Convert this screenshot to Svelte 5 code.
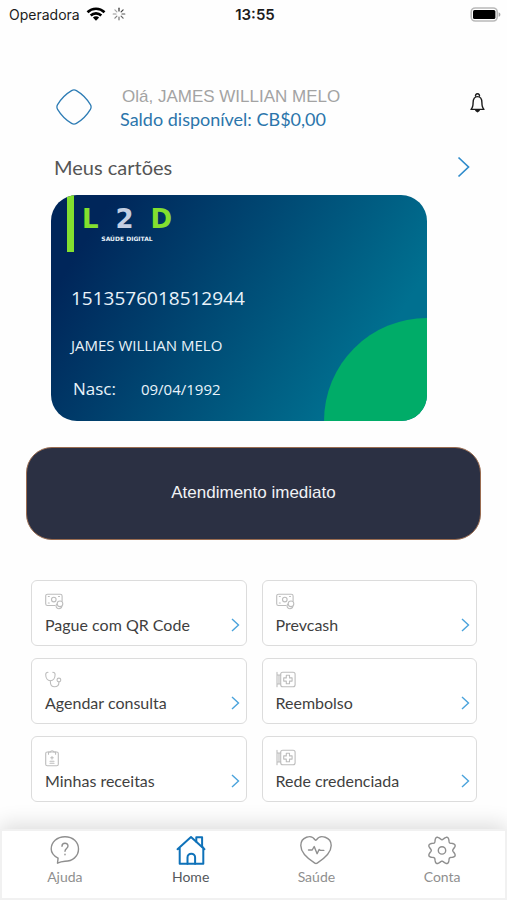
<script>
  const user = {
    name: 'JAMES WILLIAN MELO',
    balance: 'CB$0,00',
    card: '1513576018512944',
    birth: '09/04/1992'
  };

  const services = [
    { label: 'Pague com QR Code', icon: 'money' },
    { label: 'Prevcash', icon: 'money' },
    { label: 'Agendar consulta', icon: 'stethoscope' },
    { label: 'Reembolso', icon: 'sign' },
    { label: 'Minhas receitas', icon: 'clipboard' },
    { label: 'Rede credenciada', icon: 'sign' }
  ];

  const tabs = [
    { id: 'ajuda', label: 'Ajuda' },
    { id: 'home', label: 'Home' },
    { id: 'saude', label: 'Saúde' },
    { id: 'conta', label: 'Conta' }
  ];

  const rays = [0, 45, 90, 135, 180, 225, 270, 315];

  // wavy outline with eight rounded teeth
  const gearPoints = Array.from({ length: 120 }, (_, i) => {
    const a = (i / 120) * Math.PI * 2;
    const r = 12.4 - 1.7 * Math.cos(8 * a);
    return `${(17 + r * Math.cos(a)).toFixed(2)},${(15.4 + r * Math.sin(a)).toFixed(2)}`;
  }).join(' ');

  let active = $state('home');
</script>

<div class="app">
  <div class="status-bar">
    <div class="carrier">
      <span>Operadora</span>
      <svg width="20" height="14" viewBox="0 0 20 14" fill="none" stroke="#000" stroke-width="2.6">
        <path d="M1.5 5.2a12.2 12.2 0 0 1 17 0" />
        <path d="M4.7 8.5a7.6 7.6 0 0 1 10.6 0" />
        <path d="M10 13.8l-3.1-3.3a4.4 4.4 0 0 1 6.2 0z" fill="#000" stroke="none" />
      </svg>
      <svg width="14" height="14" viewBox="0 0 14 14" stroke="#333" stroke-width="1.2" stroke-linecap="round">
        {#each rays as angle, i}
          <path d="M7 1.2v2.8" transform="rotate({angle} 7 7)" opacity={1 - i * 0.08} />
        {/each}
      </svg>
    </div>
    <strong class="clock">13:55</strong>
    <div class="battery">
      <svg width="31" height="15" viewBox="0 0 31 15">
        <rect x="1.2" y="1" width="26" height="13" rx="4" fill="#fff" stroke="#b9b9b9" stroke-width="1.6" />
        <rect x="3" y="3" width="22.4" height="9" rx="1.5" fill="#000" />
        <path d="M28.6 5.2c2.4.8 2.4 3.8 0 4.6z" fill="#a5a5a5" />
      </svg>
    </div>
  </div>

  <main>
    <header class="profile">
      <svg class="avatar" width="36" height="36" viewBox="0 0 36 36" fill="none" stroke="#2f7db5" stroke-width="1.3">
        <path d="M15.6 1.6q2.4-1.4 4.8 0Q29 6.6 34.4 15.6q1.4 2.4 0 4.8Q29 29.4 20.4 34.4q-2.4 1.4-4.8 0Q7 29.4 1.6 20.4q-1.4-2.4 0-4.8Q7 6.6 15.6 1.6z" />
      </svg>
      <div class="greeting">
        <p class="hello">Olá, {user.name}</p>
        <p class="balance">Saldo disponível: {user.balance}</p>
      </div>
      <button class="icon-button" aria-label="Notificações">
        <svg width="15" height="20" viewBox="0 0 15 20" fill="none" stroke="#1b1b1b" stroke-width="1.4" stroke-linejoin="round">
          <path d="M5.7 3.6a2 2 0 1 1 3.6 0" />
          <path d="M1 16.4c2-1.8 2.1-3.2 2.1-6.8C3.1 5.6 4.8 3.6 7.5 3.6s4.4 2 4.4 6c0 3.6.1 5 2.1 6.8z" />
          <path d="M5.8 17.5h3.4L7.5 18.8z" fill="#1b1b1b" />
        </svg>
      </button>
    </header>

    <section class="cards">
      <div class="cards-title">
        <h1>Meus cartões</h1>
        <button class="icon-button" aria-label="Ver cartões">
          <svg width="13" height="22" viewBox="0 0 13 22" fill="none" stroke="#2e8bcb" stroke-width="1.7">
            <path d="M1.5 1.5L11.5 11l-10 9.5" />
          </svg>
        </button>
      </div>

      <article class="card">
        <div class="card-brand">
          <span class="stripe"></span>
          <div class="logo">
            <div class="logo-name"><span>L</span><span class="two">2</span><span>D</span></div>
            <div class="logo-tagline">SAÚDE DIGITAL</div>
          </div>
        </div>
        <p class="card-number">{user.card}</p>
        <p class="card-name">{user.name}</p>
        <p class="card-birth"><span>Nasc:</span><span class="date">{user.birth}</span></p>
      </article>
    </section>

    <button class="urgent">Atendimento imediato</button>

    <div class="services">
      {#each services as service}
        <button class="service">
          <svg width="20" height="18" viewBox="0 0 20 18" fill="none" stroke="#bdbdbd" stroke-width="1.1" stroke-linejoin="round" stroke-linecap="round">
            {#if service.icon === 'money'}
              <path d="M10 12.5H2.5A1.8 1.8 0 0 1 .7 10.7V3A1.8 1.8 0 0 1 2.5 1.2h12.8A1.8 1.8 0 0 1 17.1 3v5" />
              <circle cx="8.8" cy="6.6" r="2.3" />
              <path d="M3.3 3.5h1M13.5 3.5h1M3.3 10h1" />
              <circle cx="15" cy="10.8" r="2.8" />
              <path d="M11.5 11.2c-1.2 2.2 0 4.5 2.3 4.5 1.6 0 2.8-.7 3-2.3" />
            {:else if service.icon === 'stethoscope'}
              <path d="M3 1.2c-2 0-2.3.8-2.3 2.4 0 3.4 1.8 6.2 4.7 6.2s4.7-2.8 4.7-6.2c0-1.6-.3-2.4-2.3-2.4" />
              <path d="M5.4 9.8v1.5c0 3 1.7 4.5 4.2 4.5s4.3-1.5 4.3-4.2v-.8" />
              <circle cx="13.9" cy="9" r="1.9" />
            {:else if service.icon === 'clipboard'}
              <rect x="0.7" y="3" width="12.6" height="13.8" rx="1.5" />
              <path d="M3.5 5.2V3h1.8a1.9 1.9 0 0 1 3.6 0h1.7v2.2" />
              <path d="M7 7.5v2.6M5.7 8.8h2.6M5 12.2h4M5 14.2h4" />
            {:else}
              <rect x="4.7" y="1.3" width="14.4" height="14.4" rx="2" />
              <path d="M1 1.2v14.6M1 4h3.7M1 13h3.7M3 4v9" />
              <path d="M10.3 4.3h3.2v2.6h2.6v3.2h-2.6v2.6h-3.2v-2.6H7.7V6.9h2.6z" />
            {/if}
          </svg>
          <span class="service-row">
            <span>{service.label}</span>
            <svg width="9" height="14" viewBox="0 0 9 14" fill="none" stroke="#4aa3dc" stroke-width="1.4">
              <path d="M1 1l6.5 6L1 13" />
            </svg>
          </span>
        </button>
      {/each}
    </div>
  </main>

  <nav class="tabs">
    {#each tabs as tab}
      <button class="tab" class:active={active === tab.id} onclick={() => (active = tab.id)}>
        <svg width="34" height="30" viewBox="0 0 34 30" fill="none" stroke="currentColor" stroke-width="1.4" stroke-linejoin="round" stroke-linecap="round">
          {#if tab.id === 'ajuda'}
            <path d="M9.5 28.2l.6-5C6 21 3.2 18 3.2 14 3.2 7 9 1.7 17 1.7S30.5 7 30.5 14c0 7.3-6 12.3-13.5 12.3-2.8.2-5 .7-7.5 1.9z" />
            <path d="M14 11.2c0-4 6-3.9 6-.3 0 2.5-3 2.6-3 5.3M17 19.3v.4" />
          {:else if tab.id === 'home'}
            <g stroke-width="2">
              <path d="M3.5 14.2L17 2l13.5 12.2M5.7 12.5v16.3h23.6V12.5" />
              <path d="M22.3 6.7V2.2h5.8v9.6M13.5 28.8v-6.3a3.8 3.8 0 0 1 7.6 0v6.3" />
            </g>
          {:else if tab.id === 'saude'}
            <path d="M15.8 28.1C8.5 23.5 1.8 17.5 1.8 10.5c0-8.5 10.5-11.6 14.2-5.7.4.5 1 .5 1.4 0 3.7-5.9 14.8-2.8 14.8 5.7 0 7-6.8 13-14 17.6-.8.5-1.6.5-2.4 0z" />
            <path d="M9.5 15h3.7l2-3.5 2.9 7.2 2-4.2 1.3.9h3.4" />
          {:else}
            <polygon points={gearPoints} />
            <circle cx="17" cy="15.4" r="3.7" />
          {/if}
        </svg>
        <span>{tab.label}</span>
      </button>
    {/each}
  </nav>
</div>

<style>
  :global(body) {
    background: #fefefe;
  }

  .app {
    display: flex;
    flex-direction: column;
    min-height: 100vh;
    background: #fefefe;
    color: #3f3f3f;
    font-family: Lato, sans-serif;
  }

  p,
  h1 {
    margin: 0;
    font-weight: 400;
  }

  button {
    font-family: inherit;
    cursor: pointer;
  }

  svg {
    display: block;
    flex: none;
  }

  /* Status bar */
  .status-bar {
    display: grid;
    grid-template-columns: 1fr auto 1fr;
    align-items: center;
    height: 28px;
    padding: 0 6px 0 9px;
    color: #1c1c1c;
    font-family: Inter, sans-serif;
    font-size: 14px;
  }

  .carrier {
    display: flex;
    align-items: center;
    gap: 6px;
  }

  .clock {
    font-size: 15px;
    font-weight: 600;
  }

  .battery {
    display: flex;
    justify-content: flex-end;
  }

  main {
    padding: 59px 26px 27px;
  }

  /* Profile */
  .profile {
    display: flex;
    align-items: center;
    padding-left: 30px;
  }

  .avatar {
    margin-bottom: 4px;
  }

  .greeting {
    flex: 1;
    margin-left: 28px;
  }

  .hello {
    padding-left: 2px;
    color: #a3a3a3;
    font-family: 'Liberation Sans', sans-serif;
    font-size: 17px;
    line-height: 20px;
  }

  .balance {
    color: #2b75ab;
    font-size: 18px;
    line-height: 24px;
  }

  .icon-button {
    display: flex;
    padding: 4px;
    border: none;
    background: none;
  }

  .profile .icon-button {
    margin-right: -8px;
    margin-bottom: 12px;
  }

  /* Cards */
  .cards {
    padding: 20px 7px 0 25px;
  }

  .cards-title {
    display: flex;
    align-items: center;
    justify-content: space-between;
    height: 32px;
    padding-left: 3px;
    margin-bottom: 12px;
  }

  .cards-title h1 {
    color: #555;
    font-size: 20px;
    line-height: 28px;
  }

  .card {
    position: relative;
    box-sizing: border-box;
    width: 89%;
    aspect-ratio: 5 / 3;
    padding: 0 20px;
    border-radius: 26px;
    background: linear-gradient(122deg, #00265a 12%, #007090 82%);
    color: #e9f3fa;
    font-family: 'Open Sans', sans-serif;
    overflow: hidden;
  }

  .card::after {
    content: '';
    position: absolute;
    right: 0;
    bottom: 0;
    width: 103px;
    height: 103px;
    border-top-left-radius: 100%;
    background: #00ac68;
  }

  .card-brand {
    display: flex;
    gap: 8px;
    margin-left: -4px;
  }

  .stripe {
    width: 7px;
    height: 57px;
    background: #83e02f;
  }

  .logo {
    width: 90px;
    padding-top: 8px;
    font-family: 'DejaVu Sans', sans-serif;
    font-weight: 700;
  }

  .logo-name {
    display: flex;
    justify-content: space-between;
    color: #83e02f;
    font-size: 26px;
    line-height: 32px;
  }

  .logo-name .two {
    color: #c3cfe2;
  }

  .logo-tagline {
    font-size: 6px;
    line-height: 8px;
    text-align: center;
  }

  .card-number {
    margin-top: 32px;
    font-size: 19px;
    line-height: 28px;
  }

  .card-name {
    margin-top: 22px;
    font-size: 15px;
    line-height: 22px;
  }

  .card-birth {
    display: flex;
    align-items: center;
    gap: 25px;
    margin-top: 20px;
    padding-left: 2px;
    font-size: 17px;
    line-height: 26px;
  }

  .card-birth .date {
    font-size: 15px;
  }

  .urgent {
    display: block;
    width: 100%;
    height: 93px;
    margin-top: 26px;
    border: 1px solid #9a6c50;
    border-radius: 26px;
    background: #2b3043;
    color: #f1f2f5;
    font-family: 'Liberation Sans', sans-serif;
    font-size: 17px;
  }

  /* Services */
  .services {
    display: grid;
    grid-template-columns: 1fr 1fr;
    gap: 12px 15px;
    padding: 40px 4px 0 5px;
  }

  .service {
    display: flex;
    flex-direction: column;
    justify-content: space-between;
    height: 66px;
    padding: 12px 6px 8px 13px;
    border: 1px solid #dcdcdc;
    border-radius: 6px;
    background: #fff;
    color: #3f3f3f;
    font-size: 16px;
    line-height: 24px;
    text-align: left;
  }

  .service-row {
    display: flex;
    align-items: center;
    justify-content: space-between;
    width: 100%;
  }

  /* Bottom tabs */
  .tabs {
    display: flex;
    box-sizing: border-box;
    height: 71px;
    margin-top: auto;
    border: 2px solid #f1f1f1;
    background: #fff;
    box-shadow: 0 -4px 20px rgba(0, 0, 0, 0.14);
  }

  .tab {
    display: flex;
    flex: 1;
    flex-direction: column;
    align-items: center;
    gap: 2px;
    padding: 4px 0 0;
    border: none;
    background: none;
    color: #8f8f8f;
    font-size: 14px;
    line-height: 20px;
  }

  .tab.active {
    color: #0f72b9;
  }

  .tab.active span {
    color: #55585c;
  }
</style>
